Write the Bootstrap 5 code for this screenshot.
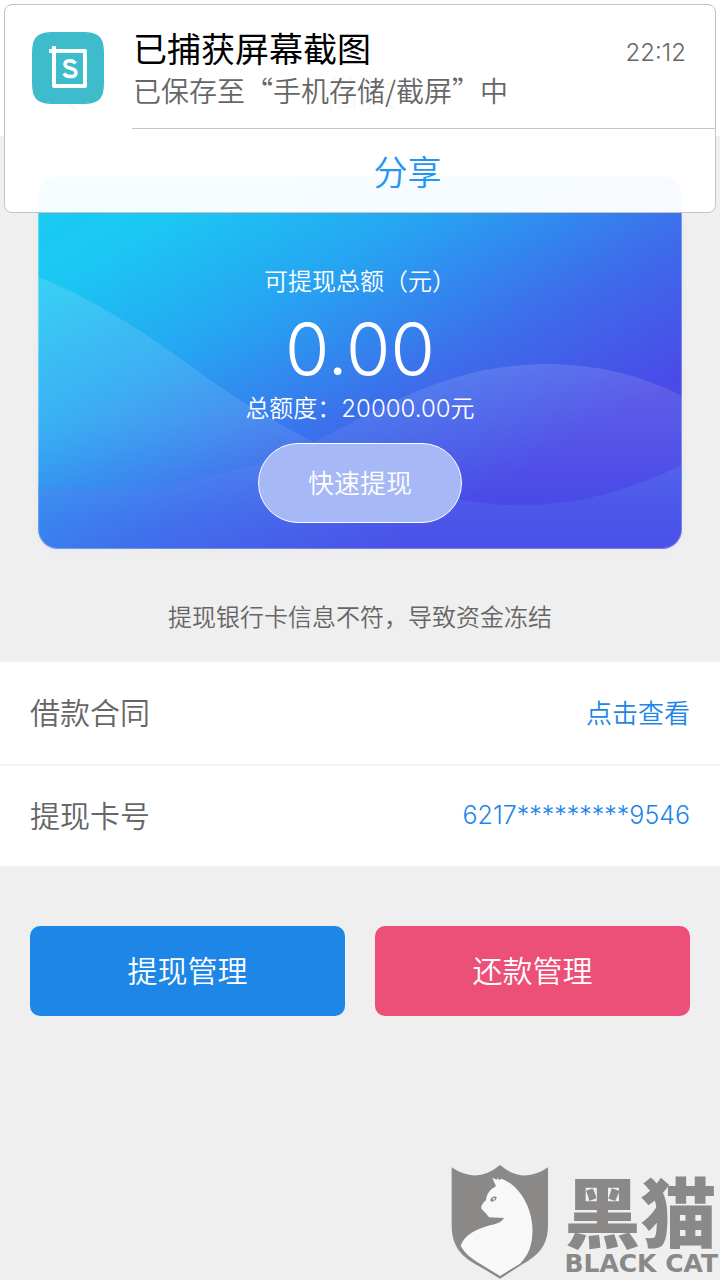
<!DOCTYPE html>
<html lang="zh-CN">
<head>
<meta charset="utf-8">
<meta name="viewport" content="width=device-width, initial-scale=1">
<title>借款</title>
<link href="https://cdn.jsdelivr.net/npm/bootstrap@5.3.0/dist/css/bootstrap.min.css" rel="stylesheet">
<style>
  body { background: #efefef; color: #666; font-family: Inter, "Noto Sans CJK SC", sans-serif; font-weight: 350; }
  .app-header { height: 136px; padding: 56px 30px 0; }
  .app-title { font-size: 36px; line-height: 76px; font-weight: 350; }
  .back-link { left: 58px; top: 76px; color: #666; line-height: 0; }

  /* Screenshot notification, floats over the page */
  .notice { margin: 4px; height: 209px; border: 1px solid #c4c4c4; border-radius: 8px; background: rgba(255,255,255,.96); z-index: 10; }
  .notice-top { height: 123px; padding: 24px 29px 0 27px; gap: 29px; }
  .notice-icon { margin-top: 3px; }
  .notice-title { font-size: 34px; line-height: 42px; color: #000; font-weight: 400; }
  .notice-text { font-size: 28px; line-height: 38px; font-family: "Noto Sans CJK SC", sans-serif; }
  .notice-time { font-size: 24px; line-height: 48px; }
  .notice-share { margin-left: 127px; padding-right: 32px; border-top: 1px solid #c4c4c4; height: 84px; }
  .share-btn { font-size: 34px; line-height: 88px; color: #2196f3; font-weight: 350; }

  .quota { margin: 40px 38px 0; padding: 88px 16px 26px; border-radius: 20px; color: #fff;
    background: linear-gradient(150deg, #19cbf3 0%, #1bc8f3 15%, #26a5f2 35%, #3d6deb 57%, #4a4ae7 77%, #4a4ae7 100%);
    box-shadow: inset 0 0 0 1px rgba(255,255,255,.3), 0 0 8px rgba(0,0,0,.03); }
  .quota-label { font-size: 24px; line-height: 36px; }
  .quota-amount { font-size: 72px; line-height: 72px; margin: 13px 0 6px; font-weight: 350; }
  .quick-btn { width: 204px; height: 80px; margin-top: 16px; font-size: 26px; font-weight: 350; color: #fff; background: #a6b8f6; border: 1px solid #fff; }

  .tip { font-size: 24px; line-height: 36px; padding: 51px 16px 26px; }
  .info-row { min-height: 102px; padding: 0 30px; font-size: 30px; }
  .info-row + .info-row { border-top: 2px solid #f5f5f5; }
  .info-value { font-size: 26px; color: #1e86e7; }
  .card-no { font-size: 25px; }
  .actions { padding: 60px 30px; gap: 30px; }
  .action-btn { height: 90px; border: 0; border-radius: 10px; font-size: 30px; font-weight: 350; color: #fff; }
  .bg-withdraw { background: #1e86e7; }
  .bg-repay { background: #ec5078; }

  .brand { color: #8b8888; gap: 15px; padding-right: 2px; }
  .brand-cn { font-size: 76px; line-height: 78px; font-weight: 900; font-family: "Noto Sans CJK SC", sans-serif; }
  .brand-en { font-size: 25px; line-height: 32px; font-weight: 700; font-family: "DejaVu Sans", sans-serif; }
</style>
</head>
<body>
<div class="min-vh-100 d-flex flex-column position-relative">
  <section class="notice position-absolute top-0 start-0 end-0" aria-label="通知">
    <div class="notice-top d-flex">
      <svg class="notice-icon flex-shrink-0" width="72" height="72" viewBox="0 0 72 72" aria-hidden="true">
        <path d="M0 22C0 5 5 0 22 0H50C67 0 72 5 72 22V50C72 67 67 72 50 72H22C5 72 0 67 0 50Z" fill="#3ebccb"/>
        <path d="M17 19H53V54H22V14" fill="none" stroke="#fff" stroke-width="4" stroke-linejoin="round"/>
        <path d="M43.500 31.500C41 28 33 27.500 33 32.500C33 37.500 44 35 44 40.500C44 46 34.500 45.500 32 41.500" fill="none" stroke="#fff" stroke-width="3.500"/>
      </svg>
      <div class="flex-grow-1 text-nowrap">
        <div class="notice-title">已捕获屏幕截图</div>
        <div class="notice-text">已保存至“手机存储/截屏”中</div>
      </div>
      <time class="notice-time">22:12</time>
    </div>
    <div class="notice-share d-flex justify-content-center">
      <button type="button" class="share-btn btn p-0 border-0">分享</button>
    </div>
  </section>

  <header class="app-header bg-white text-center position-relative">
    <a href="#" class="back-link position-absolute" aria-label="返回">
      <svg width="20" height="36" viewBox="0 0 20 36" fill="none" stroke="currentColor" stroke-width="3"><path d="M18 2L3 18L18 34"/></svg>
    </a>
    <h1 class="app-title m-0">借款</h1>
  </header>

  <main>
    <section class="quota position-relative overflow-hidden text-center">
      <svg class="position-absolute top-0 start-0 w-100 h-100" viewBox="0 0 644 373" preserveAspectRatio="none" aria-hidden="true">
        <defs>
          <linearGradient id="waveA" gradientUnits="userSpaceOnUse" x1="0" y1="100" x2="0" y2="340"><stop offset="0" stop-color="#fff" stop-opacity=".13"/><stop offset=".6" stop-color="#fff" stop-opacity=".1"/><stop offset="1" stop-color="#fff" stop-opacity="0"/></linearGradient>
          <linearGradient id="waveB" gradientUnits="userSpaceOnUse" x1="0" y1="188" x2="0" y2="325"><stop offset="0" stop-color="#fff" stop-opacity=".13"/><stop offset="1" stop-color="#fff" stop-opacity="0"/></linearGradient>
          <linearGradient id="waveC" gradientUnits="userSpaceOnUse" x1="0" y1="280" x2="0" y2="373"><stop offset="0" stop-color="#5b83f5" stop-opacity=".4"/><stop offset="1" stop-color="#5078f0" stop-opacity=".15"/></linearGradient>
        </defs>
        <path d="M0 101C70 128 130 174 182 211Q228 242 275 266L310 340H0Z" fill="url(#waveA)"/>
        <path d="M275 266C350 230 410 188 512 188Q584 189 644 220V340H240Z" fill="url(#waveB)"/>
        <path d="M0 310C90 320 160 305 224 287C300 270 360 312 424 324C500 338 574 324 644 289V373H0Z" fill="url(#waveC)"/>
      </svg>
      <div class="position-relative">
        <div class="quota-label">可提现总额（元）</div>
        <div class="quota-amount">0.00</div>
        <div class="quota-label">总额度：20000.00元</div>
        <button type="button" class="quick-btn btn rounded-pill">快速提现</button>
      </div>
    </section>

    <p class="tip text-center m-0">提现银行卡信息不符，导致资金冻结</p>

    <section class="bg-white">
      <div class="info-row d-flex align-items-center justify-content-between">
        <span>借款合同</span>
        <a href="#" class="info-value text-decoration-none">点击查看</a>
      </div>
      <div class="info-row d-flex align-items-center justify-content-between">
        <span>提现卡号</span>
        <span class="info-value card-no">6217*********9546</span>
      </div>
    </section>

    <div class="actions d-flex">
      <button type="button" class="action-btn bg-withdraw btn flex-fill">提现管理</button>
      <button type="button" class="action-btn bg-repay btn flex-fill">还款管理</button>
    </div>
  </main>

  <footer class="brand d-flex justify-content-end align-items-end mt-auto">
    <svg width="98" height="116" viewBox="33 28 294 348" aria-hidden="true">
      <path d="M35 38Q110 90 180 31Q250 90 324 38V210C324 275 295 302 240 333L180 372L120 336C62 305 35 275 35 210Z" fill="#8b8888"/>
      <path d="M157 69L168 95C150 104 140 118 138 136C124 151 122 156 125 163C131 170 139 176 147 188L192 190C185 203 170 208 150 212C110 222 72 242 62 273C75 298 98 314 125 330L180 364L240 327C268 300 280 262 277 215C274 155 237 92 185 72L178 76L171 69L172 76Z" fill="#f8f8f8"/>
      <path d="M151 136Q154 124 170 126Q170 140 153 141Z" fill="#8b8888"/><path d="M157 129L165 131L162 138Z" fill="#f8f8f8"/>
    </svg>
    <div class="text-nowrap">
      <div class="brand-cn">黑猫</div>
      <div class="brand-en">BLACK CAT</div>
    </div>
  </footer>
</div>
<script src="https://cdn.jsdelivr.net/npm/bootstrap@5.3.0/dist/js/bootstrap.bundle.min.js"></script>
</body>
</html>
